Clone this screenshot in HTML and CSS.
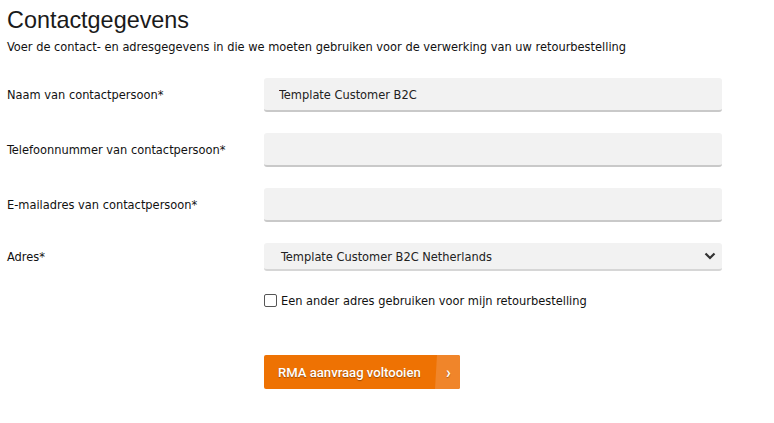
FILE: index.html
```html
<!DOCTYPE html>
<html lang="nl">
<head>
<meta charset="utf-8">
<link rel="stylesheet" href="styles.css">
</head>
<body>
<div class="page">
  <h1 class="title">Contactgegevens</h1>
  <p class="intro">Voer de contact- en adresgegevens in die we moeten gebruiken voor de verwerking van uw retourbestelling</p>
  <form class="form">
    <label class="label">Naam van contactpersoon*</label>
    <div class="field"><input class="input" type="text" value="Template Customer B2C"></div>
    <label class="label">Telefoonnummer van contactpersoon*</label>
    <div class="field"><input class="input" type="text"></div>
    <label class="label">E-mailadres van contactpersoon*</label>
    <div class="field"><input class="input" type="text"></div>
    <label class="label label-select">Adres*</label>
    <div class="field">
      <div class="select">
        <span class="select-value">Template Customer B2C Netherlands</span>
        <svg class="chev" width="12" height="8" viewBox="0 0 12 8"><path d="M1.5 1.5 L6 6 L10.5 1.5" fill="none" stroke="#333" stroke-width="2.2"/></svg>
      </div>
    </div>
    <div></div>
    <label class="check"><span class="box"></span>Een ander adres gebruiken voor mijn retourbestelling</label>
    <div></div>
    <div class="actions">
      <button class="btn" type="button"><span class="btn-text">RMA aanvraag voltooien</span><span class="btn-arrow">›</span></button>
    </div>
  </form>
</div>
</body>
</html>
```
FILE: styles.css
```css
html, body { margin: 0; padding: 0; background: #fff; }
.page {
  padding: 6px 7px 0 7px;
  font-family: "DejaVu Sans Condensed", "DejaVu Sans", sans-serif;
  font-size: 12.7px;
  color: #111;
}
.title {
  margin: 0;
  font-family: "Liberation Sans", Arial, sans-serif;
  font-weight: normal;
  font-size: 23.4px;
  line-height: 28px;
  color: #1a1a1a;
}
.intro { margin: 5px 0 0 0; line-height: 16px; }
.form {
  margin-top: 23px;
  display: grid;
  grid-template-columns: 257px 458px;
  row-gap: 21px;
  align-items: center;
}
.label { line-height: 16px; }
.input {
  box-sizing: border-box;
  display: block;
  width: 458px;
  height: 34px;
  margin: 0;
  border: 0;
  border-bottom: 2px solid #c9c9c9;
  border-radius: 3px;
  background: #f2f2f2;
  padding: 0 16px 0 15px;
  font: inherit;
  color: #222;
  outline: none;
}
.select {
  box-sizing: border-box;
  height: 28px;
  background: #f2f2f2;
  border-bottom: 2px solid #d6d6d6;
  border-radius: 3px;
  display: flex;
  align-items: center;
  justify-content: space-between;
  padding: 0 6px 0 17px;
  color: #222;
}
.chev { display: block; }
.check {
  display: flex;
  align-items: center;
  gap: 4px;
  margin-top: 1px;
}
.box {
  width: 11px;
  height: 11px;
  border: 1px solid #555;
  border-radius: 2px;
  background: #fff;
}
.actions { margin-top: 26px; }
.btn {
  display: flex;
  align-items: stretch;
  height: 34px;
  padding: 0;
  border: 0;
  border-radius: 2px;
  background: #ee7203;
  overflow: hidden;
  cursor: pointer;
  font-family: "Roboto", "Liberation Sans", sans-serif;
  color: #fff;
}
.btn-text {
  display: flex;
  align-items: center;
  width: 171px;
  padding-left: 14px;
  box-sizing: border-box;
  font-size: 13.1px;
  font-weight: 500;
  text-shadow: 0 1px 1px rgba(0,0,0,0.35);
  white-space: nowrap;
}
.btn-arrow {
  display: flex;
  align-items: center;
  justify-content: center;
  width: 25px;
  padding-left: 2px;
  box-sizing: border-box;
  background: #f0852a;
  clip-path: polygon(2px 0, 100% 0, 100% 100%, 0 100%);
  font-size: 16px;
  font-weight: 700;
  text-shadow: 0 1px 1px rgba(0,0,0,0.3);
}
```
